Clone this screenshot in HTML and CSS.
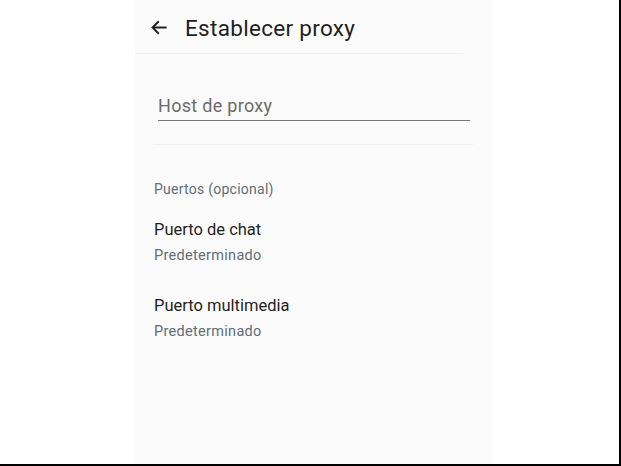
FILE: index.html
```html
<!DOCTYPE html>
<html lang="es">
<head>
    <meta charset="utf-8">
    <title>Establecer proxy</title>
    <link rel="stylesheet" href="styles.css">
</head>
<body>
    <div class="frame">
        <main class="panel">
            <header class="topbar">
                <svg class="back" width="18" height="18" viewBox="0 0 24 24">
                    <path d="M21 12H5M11.5 5l-7 7 7 7" fill="none" stroke="#1f1f1f" stroke-width="2.4" stroke-linecap="square"/>
                </svg>
                <h1>Establecer proxy</h1>
            </header>

            <div class="field">
                <span class="placeholder">Host de proxy</span>
            </div>

            <div class="divider"></div>

            <section class="ports">
                <p class="label">Puertos (opcional)</p>
                <div class="item">
                    <p class="item-title">Puerto de chat</p>
                    <p class="item-sub">Predeterminado</p>
                </div>
                <div class="item">
                    <p class="item-title">Puerto multimedia</p>
                    <p class="item-sub">Predeterminado</p>
                </div>
            </section>
        </main>
    </div>
</body>
</html>
```

FILE: styles.css
```css
html, body {
    margin: 0;
    padding: 0;
    background: #ffffff;
    font-family: Roboto, "Noto Sans", sans-serif;
}

.frame {
    width: 619px;
    height: 464px;
    border-right: 2px solid #000;
    border-bottom: 2px solid #000;
    overflow: hidden;
}

.panel {
    margin-left: 135px;
    width: 356px;
    height: 100%;
    background: #fbfbfb;
}

.topbar {
    display: flex;
    align-items: center;
    height: 51px;
    padding-top: 2px;
    margin-right: 28px;
    padding-left: 14px;
    border-bottom: 1px solid #f0f0f0;
}

.back {
    display: block;
    width: 19px;
    height: 19px;
}

.topbar h1 {
    margin: 0 0 0 17px;
    font-size: 22.5px;
    font-weight: 400;
    letter-spacing: 0.3px;
    color: #1f1f1f;
}

.field {
    margin: 0 21px 0 23px;
    padding-top: 40px;
    padding-bottom: 2px;
    border-bottom: 1.5px solid #777;
}

.placeholder {
    display: block;
    line-height: 24px;
    font-size: 18px;
    letter-spacing: 0.3px;
    color: #6b6b6b;
}

.divider {
    margin: 23px 18px 0 18px;
    height: 1px;
    background: #f0f0f0;
}

.ports {
    padding: 34px 0 0 19px;
}

.ports p {
    margin: 0;
}

.label {
    font-size: 14px;
    line-height: 20px;
    letter-spacing: 0.25px;
    color: #5f6e77;
}

.item {
    margin-top: 20px;
}

.item + .item {
    margin-top: 29px;
}

.item-title {
    font-size: 16.5px;
    line-height: 22px;
    color: #1f1f1f;
}

.item-sub {
    margin-top: 5px !important;
    font-size: 14.5px;
    line-height: 20px;
    letter-spacing: 0.3px;
    color: #5f6e77;
}
```
